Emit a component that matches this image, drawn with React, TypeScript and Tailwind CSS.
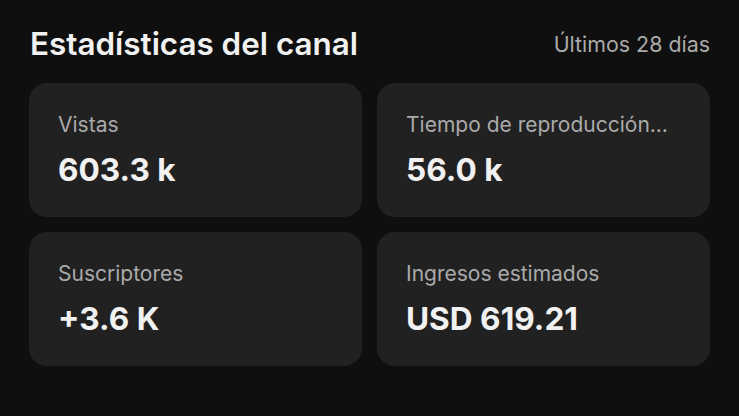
const stats = [
  { label: 'Vistas', value: '603.3 k' },
  { label: 'Tiempo de reproducción…', value: '56.0 k' },
  { label: 'Suscriptores', value: '+3.6 K' },
  { label: 'Ingresos estimados', value: 'USD 619.21' },
];

function StatCard({ label, value }: { label: string; value: string }) {
  return (
    <div className="flex h-[134px] min-w-0 flex-col rounded-[18px] bg-[#212121] pt-[29px] pr-[20px] pl-[29px]">
      <p className="truncate text-[21px] leading-[26px] text-[#aaaaaa]">{label}</p>
      <p className="mt-[14px] text-[31.6px] leading-[36px] font-bold text-[#f1f1f1]">{value}</p>
    </div>
  );
}

export default function App() {
  return (
    <div
      className="h-[416px] w-[739px] bg-[#0f0f0f] px-[29px] pt-[24px]"
      style={{ fontFamily: 'Inter, "Noto Sans", sans-serif' }}
    >
      <div className="flex items-center justify-between pl-px">
        <h2 className="text-[31.4px] leading-[40px] font-semibold text-[#f1f1f1]">
          Estadísticas del canal
        </h2>
        <span className="text-[21.4px] text-[#aaaaaa]">Últimos 28 días</span>
      </div>
      <div className="mt-[19px] grid grid-cols-2 gap-[15px]">
        {stats.map((s) => (
          <StatCard key={s.label} label={s.label} value={s.value} />
        ))}
      </div>
    </div>
  );
}
